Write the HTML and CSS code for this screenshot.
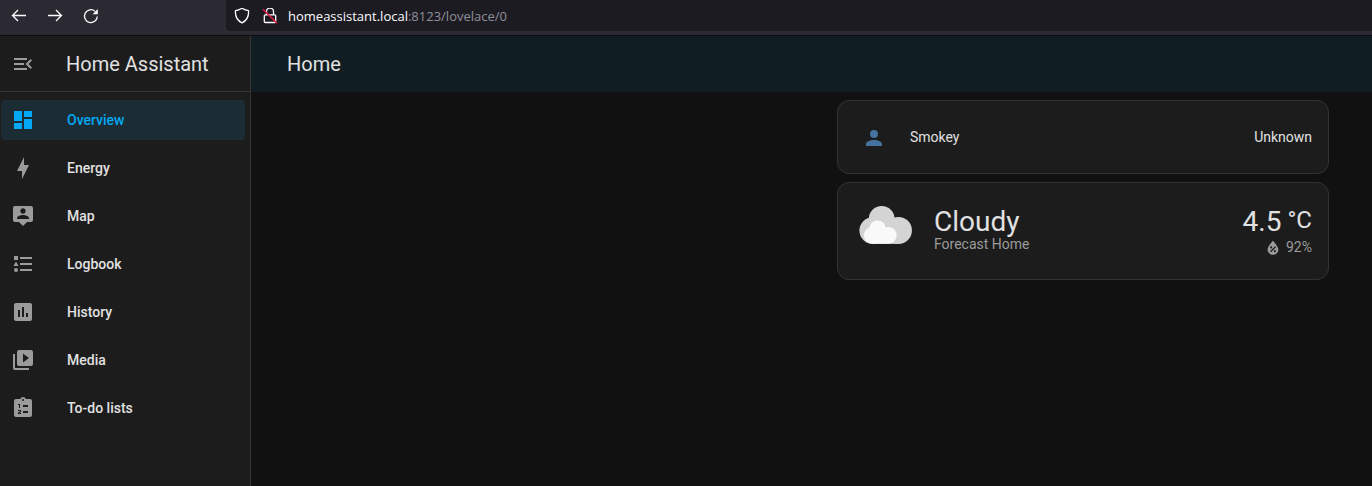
FILE: index.html
```
<!DOCTYPE html>
<html lang="en">
<head>
<meta charset="utf-8">
<title>Home Assistant</title>
<link rel="stylesheet" href="styles.css">
</head>
<body>
<div class="browser">
  <div class="browser-nav">
    <svg class="nav-icon" viewBox="0 0 16 16"><path d="M15 7.500H1.500M7 2L1.500 7.500L7 13"/></svg>
    <svg class="nav-icon" viewBox="0 0 16 16"><path d="M1 7.500H14.500M9 2L14.500 7.500L9 13"/></svg>
    <svg class="nav-icon" viewBox="0 0 16 16"><path d="M14.300 8.500A6.400 6.400 0 1 1 12 3.200"/><path class="solid" d="M14.800 1V6.200H9.600Z"/></svg>
  </div>
  <div class="urlbar">
    <svg class="nav-icon" viewBox="0 0 16 16"><path d="M8 .3C10 1.500 12 2.400 14.500 2.700C15 8 12.800 12.500 8 14.800C3.200 12.500 1 8 1.500 2.700C4 2.400 6 1.500 8 .3Z"/></svg>
    <svg class="nav-icon lock" viewBox="0 0 16 16"><path d="M4.500 6.800V3.500A3.500 3.500 0 0 1 11.500 3.500V6.800M3.300 6.800H12.700A1 1 0 0 1 13.700 7.800V13.500A1 1 0 0 1 12.700 14.500H3.300A1 1 0 0 1 2.300 13.500V7.800A1 1 0 0 1 3.300 6.800Z"/><path class="slash" d="M1 1.200L15 15.200"/></svg>
    <span class="url">homeassistant.local<span class="url-path">:8123/lovelace/0</span></span>
  </div>
</div>
<div class="app">
  <nav class="sidebar">
    <div class="sidebar-head">
      <svg class="icon" viewBox="0 0 24 24"><path d="M21,15.610L19.590,17L14.580,12L19.590,7L21,8.390L17.440,12L21,15.610M3,6H16V8H3V6M3,13V11H13V13H3M3,18V16H16V18H3Z"/></svg>
      <span class="title">Home Assistant</span>
    </div>
    <div class="menu">
      <a class="item active"><svg class="icon" viewBox="0 0 24 24"><path d="M13,3V9H21V3M13,21H21V11H13M3,21H11V15H3M3,13H11V3H3V13Z"/></svg><span>Overview</span></a>
      <a class="item"><svg class="icon" viewBox="0 0 24 24"><path d="M11 15H6L13 1V9H18L11 23V15Z"/></svg><span>Energy</span></a>
      <a class="item"><svg class="icon" viewBox="0 0 24 24"><path d="M20 2H4C2.900 2 2 2.900 2 4V16C2 17.110 2.900 18 4 18H8L12 22L16 18H20C21.110 18 22 17.110 22 16V4C22 2.900 21.110 2 20 2M12 4.300C13.500 4.300 14.700 5.500 14.700 7S13.500 9.700 12 9.700 9.300 8.500 9.300 7 10.500 4.300 12 4.300M18 15H6V14.100C6 12.100 10 11 12 11S18 12.100 18 14.100V15Z"/></svg><span>Map</span></a>
      <a class="item"><svg class="icon" viewBox="0 0 24 24"><path d="M5,9.500L7.500,14H2.500L5,9.500M3,4H7V8H3V4M5,20A2,2 0 0,0 7,18A2,2 0 0,0 5,16A2,2 0 0,0 3,18A2,2 0 0,0 5,20M9,5V7H21V5H9M9,19H21V17H9V19M9,13H21V11H9V13Z"/></svg><span>Logbook</span></a>
      <a class="item"><svg class="icon" viewBox="0 0 24 24"><path d="M9 17H7V10H9M13 17H11V7H13M17 17H15V13H17M19 3H5C3.890 3 3 3.890 3 5V19C3 20.100 3.900 21 5 21H19C20.100 21 21 20.100 21 19V5C21 3.890 20.100 3 19 3Z"/></svg><span>History</span></a>
      <a class="item"><svg class="icon" viewBox="0 0 24 24"><path d="M4,6H2V20A2,2 0 0,0 4,22H18V20H4V6M20,2H8A2,2 0 0,0 6,4V16A2,2 0 0,0 8,18H20A2,2 0 0,0 22,16V4A2,2 0 0,0 20,2M12,14.500V5.500L18,10L12,14.500Z"/></svg><span>Media</span></a>
      <a class="item"><svg class="icon" viewBox="0 0 24 24"><path d="M19 3H14.820A3 3 0 0 0 9.180 3H5A2 2 0 0 0 3 5V19A2 2 0 0 0 5 21H19A2 2 0 0 0 21 19V5A2 2 0 0 0 19 3M12 3A1 1 0 1 1 12 5A1 1 0 1 1 12 3M7 8H9V12H8V9H7ZM7 14H10V16L8.500 17H10V18H7V16.600L9 15.400V15H7ZM12 9H17V11H12ZM12 15H17V17H12Z"/></svg><span>To-do lists</span></a>
    </div>
  </nav>
  <main class="main">
    <header class="topbar">Home</header>
    <section class="cards">
      <article class="card entity">
        <svg class="icon person" viewBox="0 0 24 24"><path d="M12,4A4,4 0 0,1 16,8A4,4 0 0,1 12,12A4,4 0 0,1 8,8A4,4 0 0,1 12,4M12,14C16.420,14 20,15.790 20,18V20H4V18C4,15.790 7.580,14 12,14Z"/></svg>
        <span class="entity-name">Smokey</span>
        <span>Unknown</span>
      </article>
      <article class="card weather">
        <svg class="cloud" viewBox="0 0 54 40">
          <g class="cloud-back"><circle cx="13.700" cy="25.600" r="13.300"/><circle cx="22.700" cy="13.800" r="12.900"/><circle cx="39.400" cy="25.400" r="13.500"/><path d="M13.700 20H39.400V38.900H13.700Z"/></g>
          <g class="cloud-front"><circle cx="13.200" cy="30.400" r="8.300"/><circle cx="18.600" cy="23.600" r="8.200"/><circle cx="29.300" cy="30.300" r="8.400"/><path d="M13.200 27H29.300V38.700H13.200Z"/></g>
        </svg>
        <div class="condition"><div class="state">Cloudy</div><div class="place">Forecast Home</div></div>
        <div class="reading">
          <div class="temp">4.5<span class="unit">°C</span></div>
          <div class="humidity"><svg class="drop" viewBox="0 0 24 24"><path d="M12,3.250C12,3.250 5.500,10 5.500,14A6.500,6.200 0 0,0 18.500,14C18.500,10 12,3.250 12,3.250M14.470,9.970L15.530,11.030L9.530,17.030L8.470,15.970M9.750,10A1.250,1.250 0 1,1 9.750,12.500A1.250,1.250 0 1,1 9.750,10M14.250,14.500A1.250,1.250 0 1,1 14.250,17A1.250,1.250 0 1,1 14.250,14.500Z"/></svg>92%</div>
        </div>
      </article>
    </section>
  </main>
</div>
</body>
</html>
```
FILE: styles.css
```
* { box-sizing: border-box; }
body {
  margin: 0;
  height: 486px;
  display: flex;
  flex-direction: column;
  overflow: hidden;
  background: #111;
  color: #e1e1e1;
  font: 400 14px/20px Roboto, sans-serif;
}
svg { display: block; flex: none; }

.browser {
  height: 36px;
  flex: none;
  display: flex;
  background: #2b2a33;
  border-bottom: 1px solid #0c0c0d;
}
.browser-nav {
  width: 226px;
  padding: 8px 0 0 11px;
  display: flex;
  gap: 20px;
}
.nav-icon { width: 16px; height: 16px; fill: none; stroke: #fbfbfe; stroke-width: 1.3; }
.nav-icon .solid { fill: #fbfbfe; stroke: none; }
.nav-icon .slash { stroke: #e2173f; stroke-width: 1.6; }
.urlbar {
  flex: 1;
  height: 31px;
  padding: 0 0 0 8px;
  display: flex;
  align-items: center;
  background: #1c1b22;
  border-radius: 0 0 0 4px;
}
.lock { margin-left: 12px; }
.url {
  margin-left: 10px;
  color: #fbfbfe;
  font: 400 13px/20px "Open Sans", sans-serif;
  white-space: nowrap;
}
.url-path { color: #8f8f98; }

.app { flex: 1; display: flex; min-height: 0; }
.sidebar {
  width: 251px;
  flex: none;
  background: #1c1c1c;
  border-right: 1px solid #363636;
}
.sidebar-head {
  height: 56px;
  padding-left: 11px;
  display: flex;
  align-items: center;
  border-bottom: 1px solid #363636;
}
.icon { width: 24px; height: 24px; fill: #9b9b9b; fill-rule: evenodd; }
.title { margin-left: 31px; font-size: 20px; }
.menu {
  padding: 8px 5px 0 1px;
  display: flex;
  flex-direction: column;
  gap: 8px;
}
.item {
  height: 40px;
  padding-left: 10px;
  display: flex;
  align-items: center;
  gap: 32px;
  border-radius: 4px;
  font-weight: 500;
}
.active { background: #1b2c35; color: #03a9f4; }
.active .icon { fill: #03a9f4; }

.main { flex: 1; }
.topbar {
  height: 56px;
  padding-left: 36px;
  background: #101e24;
  font-size: 20px;
  line-height: 56px;
}
.cards {
  width: 492px;
  margin: 8px 0 0 586px;
  display: flex;
  flex-direction: column;
  gap: 8px;
}
.card {
  display: flex;
  background: #1c1c1c;
  border: 1px solid #333;
  border-radius: 12px;
}
.entity { height: 74px; padding: 0 16px 0 24px; align-items: center; }
.person { margin-top: 2px; fill: #44739e; }
.entity-name { flex: 1; margin-left: 24px; }
.weather { height: 98px; padding: 22px 16px 0 21px; }
.cloud { width: 54px; height: 40px; }
.cloud-back { fill: #d4d4d4; }
.cloud-front { fill: #f9f9f9; }
.condition { margin-left: 21px; flex: 1; }
.state { font-size: 28px; line-height: 34px; }
.place { color: #9b9b9b; line-height: 10px; }
.reading { display: flex; flex-direction: column; align-items: flex-end; }
.temp { display: flex; font-size: 28px; line-height: 34px; }
.unit { margin-left: 6px; font-size: 24px; line-height: 31px; }
.humidity { display: flex; align-items: center; height: 16px; color: #9b9b9b; }
.drop { width: 20px; height: 20px; margin: 1px 3px 0 0; fill: #9b9b9b; fill-rule: evenodd; }
```
